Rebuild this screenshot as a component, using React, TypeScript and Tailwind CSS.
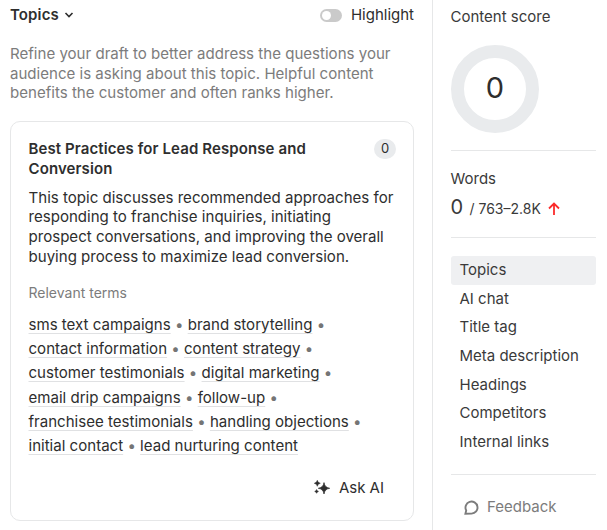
import { Fragment, useState } from 'react';

const TERMS = [
  'sms text campaigns',
  'brand storytelling',
  'contact information',
  'content strategy',
  'customer testimonials',
  'digital marketing',
  'email drip campaigns',
  'follow-up',
  'franchisee testimonials',
  'handling objections',
  'initial contact',
  'lead nurturing content',
];

const SECTIONS = ['Topics', 'AI chat', 'Title tag', 'Meta description', 'Headings', 'Competitors', 'Internal links'];

function SparkleIcon() {
  return (
    <svg width="16" height="16" viewBox="0 0 16 16" fill="currentColor">
      <path d="M10 2.6 Q10.7 7.6 15.7 8.3 Q10.7 9 10 14 Q9.3 9 4.3 8.3 Q9.3 7.6 10 2.6Z" stroke="currentColor" strokeWidth="0.7" />
      <path d="M3.3 0.3 Q3.7 2.9 6.3 3.3 Q3.7 3.7 3.3 6.3 Q2.9 3.7 0.3 3.3 Q2.9 2.9 3.3 0.3Z" stroke="currentColor" strokeWidth="0.5" />
      <path d="M2.6 9.5 Q2.9 11.1 4.5 11.4 Q2.9 11.7 2.6 13.3 Q2.3 11.7 0.7 11.4 Q2.3 11.1 2.6 9.5Z" stroke="currentColor" strokeWidth="0.5" />
    </svg>
  );
}

function TopicCard() {
  return (
    <div className="mt-[18px] h-[400px] rounded-[10px] border border-[#e6e7e8] px-[17px] pt-[17px]">
      <div className="flex items-start justify-between">
        <h2 className="w-[300px] pl-[0.5px] text-[15px] leading-[20px] font-semibold tracking-[0.1px]">
          Best Practices for Lead Response and Conversion
        </h2>
        <span className="flex h-5 w-[22px] items-center justify-center rounded-full bg-[#e9ebed] text-[13px]">0</span>
      </div>
      <p className="mt-[9px] pl-[0.5px] text-[15.07px] leading-[19.8px]">
        This topic discusses recommended approaches for responding to franchise inquiries, initiating prospect
        conversations, and improving the overall buying process to maximize lead conversion.
      </p>
      <h3 className="mt-4 pl-[0.5px] text-[14px] leading-[20px] text-[#7c7c7c]">Relevant terms</h3>
      <p className="mt-[10px] pl-[0.5px] text-[15.07px] leading-[24.3px]">
        {TERMS.map((term, i) => (
          <Fragment key={term}>
            <span className="whitespace-nowrap underline decoration-[#e0e1e3] decoration-1 underline-offset-[3px] [text-decoration-skip-ink:none]">
              {term}
            </span>
            {i < TERMS.length - 1 && <span className="text-[#757575]"> • </span>}
          </Fragment>
        ))}
      </p>
      <button className="mt-[20px] mr-[12px] ml-auto flex items-center gap-[9px] text-[15px] leading-[20px]">
        <SparkleIcon />
        Ask AI
      </button>
    </div>
  );
}

export default function App() {
  const [active, setActive] = useState('Topics');
  const [highlight, setHighlight] = useState(false);

  return (
    <div className="flex h-[530px] w-[607px] overflow-hidden bg-white font-['Inter',sans-serif] text-[#2e2e2e]">
      <main className="w-[432px] shrink-0 pt-[5px] pr-[18px] pl-[10px]">
        <div className="flex items-center justify-between text-[15px] leading-[20px]">
          <button className="flex items-center gap-[5px] font-semibold tracking-[0.12px]">
            Topics
            <svg width="10" height="6" viewBox="0 0 10 6" fill="none" stroke="currentColor" strokeWidth="1.6">
              <path d="M1.5 1 L5 4.5 L8.5 1" />
            </svg>
          </button>
          <button onClick={() => setHighlight(!highlight)} className="flex items-center gap-[9px]">
            <span className={`flex h-[13px] w-[22px] items-center rounded-full px-[2px] ${highlight ? 'justify-end bg-[#2e2e2e]' : 'bg-[#cacaca]'}`}>
              <span className="size-[9px] rounded-full bg-white" />
            </span>
            Highlight
          </button>
        </div>
        <p className="mt-[19px] text-[15.07px] leading-[19.5px] text-[#7c7c7c]">
          Refine your draft to better address the questions your audience is asking about this topic. Helpful content
          benefits the customer and often ranks higher.
        </p>
        <TopicCard />
      </main>

      <aside className="flex-1 border-l border-[#e6e7e8] pt-[7px] pr-[11px] pl-[18px] text-[15px] leading-[20px] text-[#3a3a3a]">
        <h2 className="-ml-[0.5px]">Content score</h2>
        <div className="mt-[18px] flex size-[88px] items-center justify-center rounded-full border-[13px] border-[#e9ebed] pb-[2px] text-[29px] text-[#2e2e2e]">
          0
        </div>

        <div className="mt-[17px] border-t border-[#e6e7e8] pt-[18px]">
          <h2 className="-ml-[0.5px]">Words</h2>
          <div className="mt-[6px] -ml-[0.5px] flex items-baseline">
            <span className="w-[19px] text-[20px] leading-[24px]">0</span>
            <span className="text-[14px] whitespace-nowrap">/ 763–2.8K</span>
            <svg className="mt-[3px] ml-[7px] self-center" width="12" height="13" viewBox="0 0 12 13" fill="none" stroke="#fb2c2c" strokeWidth="1.8">
              <path d="M6 13 V1.5 M1 6.5 L6 1.5 L11 6.5" />
            </svg>
          </div>
        </div>

        <nav className="mt-[18px] border-t border-[#e6e7e8] pt-[18px]">
          {SECTIONS.map((section) => (
            <button
              key={section}
              onClick={() => setActive(section)}
              className={`block h-[28.6px] w-full rounded-[3px] px-[8.5px] text-left ${section === active ? 'bg-[#eff0f2]' : ''}`}
            >
              {section}
            </button>
          ))}
        </nav>

        <div className="mt-[18px] border-t border-[#e6e7e8] pt-[22px]">
          <button className="ml-[13px] flex items-center gap-[8px] text-[#7c7c7c]">
            <svg width="15" height="15" viewBox="0 0 15 15" fill="none" stroke="currentColor" strokeWidth="1.9">
              <path d="M1.4 13.7 L2.2 10.4 A6 6 0 1 1 7.6 13.6 Z" />
            </svg>
            Feedback
          </button>
        </div>
      </aside>
    </div>
  );
}
